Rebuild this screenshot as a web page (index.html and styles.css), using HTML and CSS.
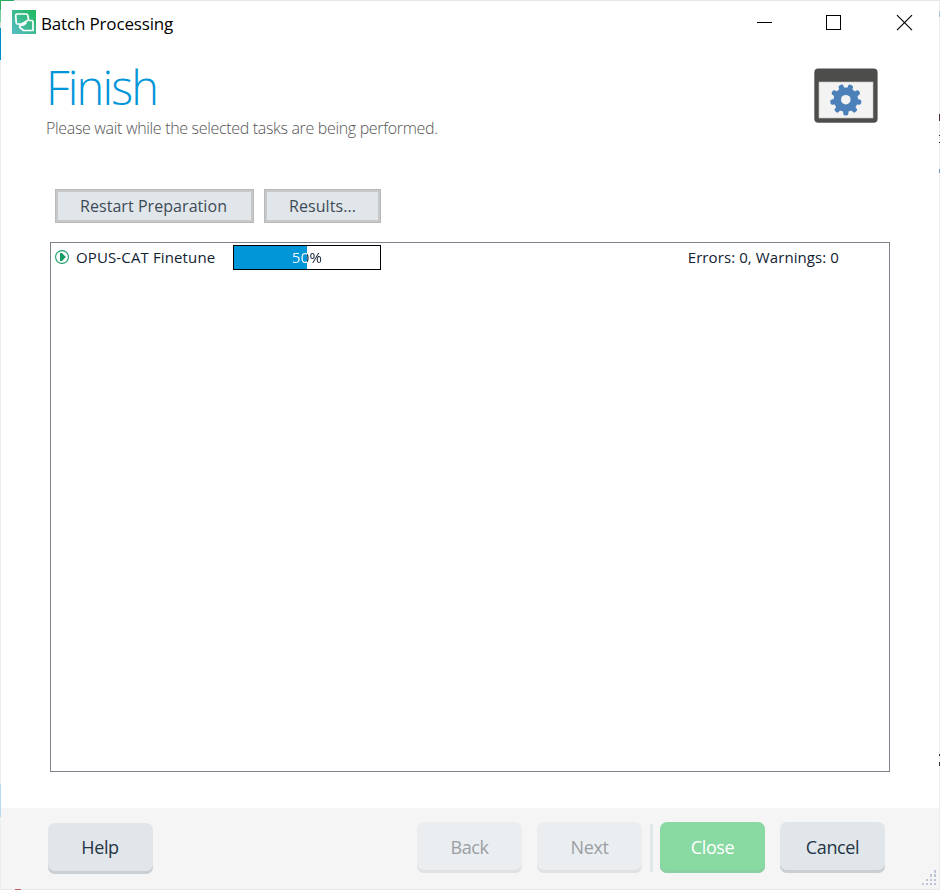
FILE: index.html
```html
<!DOCTYPE html>
<html lang="en">
<head>
<meta charset="utf-8">
<title>Batch Processing</title>
<link rel="stylesheet" href="styles.css">
</head>
<body>
<div class="window">
  <div class="titlebar">
    <svg class="app-icon" width="24" height="24" viewBox="0 0 24 24">
      <defs><linearGradient id="g" x1="1" y1="0" x2="0" y2="1"><stop offset="0" stop-color="#20b95b"/><stop offset="1" stop-color="#57bcc7"/></linearGradient></defs>
      <rect width="24" height="24" fill="url(#g)"/>
      <path d="M5 4H14Q15.500 4 15.800 5.500L16.500 9Q16.500 10 15.300 10.700L9.500 14H5.500Q4.300 14 4.200 12.800L3.700 5.500Q3.700 4 5 4ZM17 10.500H19.500Q21 10.500 21 12V20.500H11.500L7.800 17.500Q7.200 15.900 8.500 15.400L11.500 15L14.500 12.500" fill="none" stroke="#fff" stroke-width="1.700" stroke-linejoin="round"/>
    </svg>
    <span class="caption">Batch Processing</span>
    <svg class="controls" width="157" height="18" viewBox="0 0 157 18" fill="none" stroke="#000" stroke-width="1">
      <path d="M0 9.500H15M69.500 2.500H83.500V16.500H69.500Z" shape-rendering="crispEdges"/>
      <path d="M140 2.200L155 17.200M155 2.200L140 17.200" stroke-width="1.150"/>
    </svg>
  </div>
  <header class="heading">
    <div>
      <h1>Finish</h1>
      <p>Please wait while the selected tasks are being performed.</p>
    </div>
    <svg class="task-icon" width="64" height="56" viewBox="0 0 64 56">
      <rect x=".3" y=".5" width="63.300" height="54.300" rx="4" fill="#4d4d4b"/>
      <rect x="5" y="14" width="54" height="36" fill="#f3f3f3" stroke="#c5c5c0" stroke-width=".6"/>
      <g transform="translate(31.800 31.700)" fill="#4c80b9">
        <circle r="12.200"/>
        <rect id="t" x="-2.600" y="9" width="5.200" height="6.700" rx="2"/><use href="#t" transform="rotate(40)"/><use href="#t" transform="rotate(80)"/><use href="#t" transform="rotate(120)"/><use href="#t" transform="rotate(160)"/><use href="#t" transform="rotate(200)"/><use href="#t" transform="rotate(240)"/><use href="#t" transform="rotate(280)"/><use href="#t" transform="rotate(320)"/>
        <circle r="4.800" fill="#f3f3f3"/>
      </g>
    </svg>
  </header>
  <div class="toolbar">
    <button class="flat restart">Restart Preparation</button>
    <button class="flat results">Results...</button>
  </div>
  <main class="tasks">
    <div class="task">
      <svg class="state" width="14" height="14" viewBox="0 0 14 14"><circle cx="7" cy="7" r="6.400" fill="#fff" stroke="#1c9e69" stroke-width="1.100"/><path d="M5 3H7L10.800 7L7 11H5Z" fill="#159a62"/></svg>
      <span class="name">OPUS-CAT Finetune</span>
      <div class="progress"><span class="percent">50%</span></div>
      <span class="counts">Errors: 0, Warnings: 0</span>
    </div>
  </main>
  <footer class="footer">
    <button class="btn help">Help</button>
    <button class="btn disabled">Back</button>
    <button class="btn disabled next">Next</button>
    <span class="divider"></span>
    <button class="btn close">Close</button>
    <button class="btn cancel">Cancel</button>
    <svg class="grip" width="16" height="16" viewBox="0 0 16 16" fill="#bdc6d9"><path d="M13 0h2v3h-2zM13 4h2v3h-2zM9 4h2v3h-2zM13 9h2v2h-2zM9 9h2v2h-2zM5 9h2v2h-2zM13 13h2v2h-2zM9 13h2v2h-2zM5 13h2v2h-2zM1 13h2v2h-2z"/></svg>
  </footer>
</div>
</body>
</html>
```
FILE: styles.css
```css
* { box-sizing: border-box; }
body { margin: 0; background: #fff; font-family: "Open Sans", "Noto Sans", sans-serif; }
.window {
  width: 940px; height: 890px; display: flex; flex-direction: column;
  border: 1px solid; border-color: #e6e6e6 #ededed #e9e9e9 #e9eef0;
  background: #fff; position: relative;
}
.titlebar { height: 43px; flex: none; display: flex; align-items: flex-start; padding: 9px 25px 0 11px; }
.app-icon { flex: none; }
.caption { margin-left: 5px; font-size: 17px; line-height: 28px; letter-spacing: -.16px; color: #000; white-space: nowrap; }
.controls { margin: 3px 0 0 auto; width: 157px; }
.heading { height: 145px; flex: none; display: flex; justify-content: space-between; padding: 16px 61px 0 45px; }
.heading h1 { margin: 0; font-size: 47px; line-height: 54px; font-weight: 300; letter-spacing: -1.85px; color: #0096d8; }
.heading p { margin: 2px 0 0; font-size: 16px; line-height: 24px; font-weight: 300; letter-spacing: -.325px; color: #555; white-space: nowrap; }
.task-icon { margin-top: 8px; flex: none; }
.toolbar { display: flex; gap: 10px; padding-left: 54px; height: 53px; flex: none; }
button { font-family: inherit; margin: 0; padding: 0; white-space: nowrap; }
.flat { height: 34px; background: #e1e6ea; border: 1px solid #b9b9b9; box-shadow: inset 0 0 0 2px #c8c8c8; font-size: 16px; line-height: 30px; letter-spacing: .06px; color: #3d4b57; }
.restart { width: 199px; padding-right: 2px; }
.results { width: 117px; }
.tasks { margin: 0 49px; height: 530px; flex: none; border: 1px solid #7d828b; padding: 2px 4px; }
.task { display: flex; align-items: center; height: 25px; font-size: 15px; line-height: 23px; letter-spacing: .09px; color: #112233; }
.state { flex: none; margin-bottom: 1px; }
.name { width: 164px; flex: none; padding-left: 7px; letter-spacing: .13px; white-space: nowrap; }
.progress { width: 148px; height: 25px; border: 1px solid #000; text-align: center; line-height: 23px; background: linear-gradient(90deg, #0096d8 73px, #fff 73px); }
.percent { display: inline-block; color: transparent; background: linear-gradient(90deg, #fff 51%, #112233 51%); background-clip: text; -webkit-background-clip: text; }
.counts { margin-left: auto; padding-right: 46px; white-space: nowrap; }
.footer { margin-top: auto; height: 81px; flex: none; display: flex; align-items: flex-start; background: #f5f5f5; padding: 14px 54px 0 47px; position: relative; }
.btn { width: 105px; height: 51px; flex: none; border: 0; border-radius: 7px; background: #e1e6ea; box-shadow: inset 0 -3px #c9cfd3; font-size: 18px; line-height: 49px; letter-spacing: -.4px; color: #233546; }
.help { margin-top: 1px; margin-right: auto; padding: 0 1px 2px 0; }
.disabled { background: #eaeef1; box-shadow: inset 0 -3px #dfe1e3; color: #9b9fa4; }
.btn:not(.help) { padding-bottom: 1px; }
.next { margin-left: 15px; }
.divider { width: 3px; height: 48px; margin: 2px 7px 0 8px; background: #e2e7ea; }
.close { background: #89d9a3; box-shadow: inset 0 -3px #8bcfa2; color: #fff; }
.cancel { margin-left: 15px; }
.grip { position: absolute; right: 2px; bottom: 3px; }
.window::before { content: ""; position: absolute; left: -1px; top: -1px; width: 14px; height: 1px; background: #2aab62; }
.window::after {
  content: ""; position: absolute; inset: -1px; pointer-events: none;
  background:
    linear-gradient(#2aab62 0 10px, #75cda0 10px 22px, #ddd 22px 28px, #008dcc 28px) 0 0 / 1px 60px no-repeat,
    linear-gradient(#b9d9ed, #b9d9ed) 0 784px / 1px 33px no-repeat,
    linear-gradient(#a9c6dd, #a9c6dd) 100% 11px / 1px 6px no-repeat,
    linear-gradient(#542a35, #542a35) 100% 114px / 1px 7px no-repeat,
    linear-gradient(#222, #222) 100% 135px / 1px 1px no-repeat,
    linear-gradient(#222, #222) 100% 142px / 1px 1px no-repeat,
    linear-gradient(#6c98c9, #6c98c9) 100% 169px / 1px 4px no-repeat,
    linear-gradient(#333, #333) 100% 754px / 1px 2px no-repeat,
    linear-gradient(#333, #333) 100% 762px / 1px 4px no-repeat,
    linear-gradient(#b66, #b66) 15px 100% / 6px 1px no-repeat;
}
```
